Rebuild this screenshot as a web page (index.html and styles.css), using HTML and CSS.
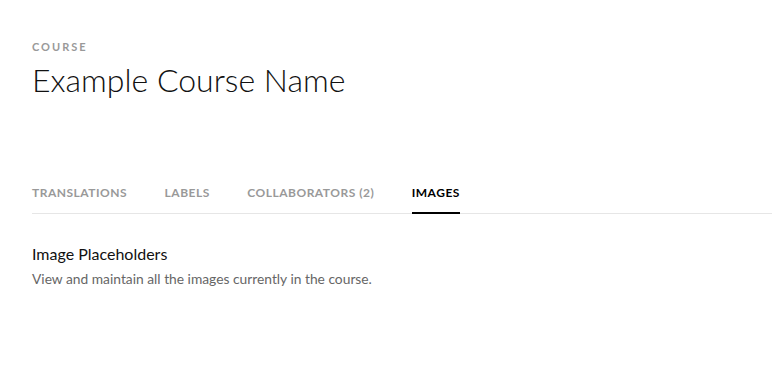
FILE: index.html
```html
<!DOCTYPE html>
<html lang="en">
  <head>
    <meta charset="UTF-8" />
    <meta name="viewport" content="width=device-width, initial-scale=1.0" />
    <title>Course Images</title>
    <link rel="stylesheet" href="styles.css">
  </head>
  <body>
    <div class="page">
      <header class="course-header">
        <div class="eyebrow">Course</div>
        <h1 class="course-title">Example Course Name</h1>
      </header>

      <nav class="tabs">
        <a class="tab" href="#">Translations</a>
        <a class="tab" href="#">Labels</a>
        <a class="tab" href="#">Collaborators (2)</a>
        <a class="tab active" href="#">Images</a>
      </nav>

      <section class="panel">
        <h2 class="panel-title">Image Placeholders</h2>
        <p class="panel-text">View and maintain all the images currently in the course.</p>
      </section>
    </div>
  </body>
</html>
```

FILE: styles.css
```css
* {
  margin: 0;
  padding: 0;
  box-sizing: border-box;
}

body {
  font-family: Lato, "Open Sans", sans-serif;
  background-color: #ffffff;
  color: #000;
}

.page {
  padding: 40px 10px 0 32px;
}

.eyebrow {
  font-size: 11px;
  font-weight: 700;
  letter-spacing: 2px;
  text-transform: uppercase;
  color: #999;
  line-height: 14px;
}

.course-title {
  font-size: 32px;
  font-weight: 300;
  line-height: 40px;
  margin-top: 6px;
  color: #111;
}

.tabs {
  display: flex;
  gap: 37.5px;
  margin-top: 86px;
  border-bottom: 1px solid #e6e6e6;
}

.tab {
  font-size: 12px;
  font-weight: 700;
  letter-spacing: 0.5px;
  text-transform: uppercase;
  color: #999;
  text-decoration: none;
  line-height: 14px;
  padding-bottom: 12px;
  border-bottom: 2px solid transparent;
  margin-bottom: -1px;
}

.tab.active {
  color: #000;
  border-bottom-color: #000;
}

.panel {
  padding-top: 30px;
}

.panel-title {
  font-size: 16px;
  font-weight: 400;
  line-height: 20px;
  color: #111;
}

.panel-text {
  font-size: 13.8px;
  line-height: 18px;
  margin-top: 6px;
  color: #666;
}
```
